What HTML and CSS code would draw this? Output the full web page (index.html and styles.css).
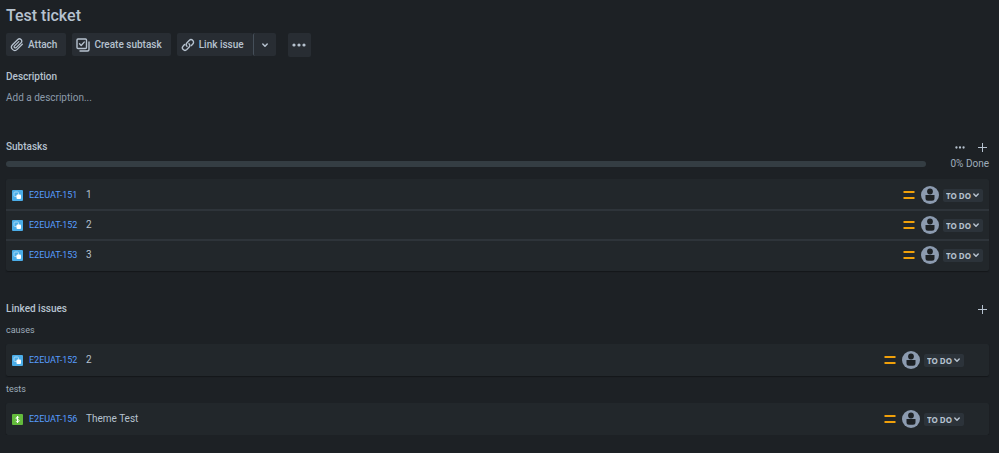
FILE: index.html
```html
<!DOCTYPE html>
<html lang="en">

<head>
    <meta charset="UTF-8" />
    <meta name="viewport" content="width=device-width, initial-scale=1" />
    <title>Test ticket</title>
    <link rel="stylesheet" href="styles.css">
</head>

<body>
    <!-- Shared icons -->
    <svg class="sprite" aria-hidden="true">
        <symbol id="icon-subtask" viewBox="0 0 11 11">
            <rect width="11" height="11" rx="1" fill="#4bade8" />
            <rect x="2" y="2" width="4.500" height="4.500" rx="1" fill="none" stroke="#a5d8f5" />
            <rect x="4.500" y="4.500" width="4.500" height="4.500" rx="1" fill="#fff" />
        </symbol>
        <symbol id="icon-test" viewBox="0 0 11 11">
            <rect width="11" height="11" rx="1" fill="#63ba3c" />
            <path d="M7.2 3.6C6.6 3 4 2.7 4 4.2c0 1.500 3.200.9 3.200 2.500 0 1.500-2.700 1.300-3.400.5M5.500 2v7" fill="none" stroke="#fff" stroke-width="1" />
        </symbol>
        <symbol id="icon-medium" viewBox="0 0 12 10">
            <path d="M.5 2h11M.5 8h11" stroke="#f0a00a" stroke-width="2" />
        </symbol>
        <symbol id="icon-person" viewBox="0 0 18 18">
            <circle cx="9" cy="9" r="9" fill="#8c9bb0" />
            <circle cx="9" cy="5.500" r="2.900" fill="#1d2125" />
            <path d="M4.500 9h9v3.200a2.500 2.500 0 0 1-2.500 2.500H7a2.500 2.500 0 0 1-2.500-2.500z" fill="#1d2125" />
        </symbol>
        <symbol id="icon-chevron" viewBox="0 0 8 8">
            <path d="M1.800 3 4 5.200 6.200 3" fill="none" stroke="currentColor" stroke-width="1.500" stroke-linecap="round" stroke-linejoin="round" />
        </symbol>
        <symbol id="icon-plus" viewBox="0 0 9 9">
            <path d="M4.500 0v9M0 4.500h9" stroke="currentColor" />
        </symbol>
        <symbol id="icon-more" viewBox="0 0 14 4">
            <circle cx="2" cy="2" r="1.600" fill="currentColor" />
            <circle cx="7" cy="2" r="1.600" fill="currentColor" />
            <circle cx="12" cy="2" r="1.600" fill="currentColor" />
        </symbol>
    </svg>

    <main class="ticket">
        <h1>Test ticket</h1>

        <div class="toolbar">
            <button class="btn">
                <svg class="btn-icon" viewBox="0 0 14 14"><path d="M12.300 6.200 7.200 11.400a3.300 3.300 0 0 1-4.700-4.700l5.300-5.200a2.300 2.300 0 0 1 3.300 3.200L6.200 9.600a1.200 1.200 0 0 1-1.700-1.700l4.300-4.300" fill="none" stroke="currentColor" stroke-width="1.300" stroke-linecap="round" stroke-linejoin="round" /></svg>
                Attach
            </button>
            <button class="btn">
                <svg class="btn-icon" viewBox="0 0 14 14"><g fill="none" stroke="currentColor" stroke-width="1.400" stroke-linecap="round" stroke-linejoin="round"><rect x="1" y="1" width="9.500" height="9.500" rx="1" /><path d="m3.500 5.800 1.700 1.700 3-3.400M13 4v7.500a1.500 1.500 0 0 1-1.500 1.500H4" /></g></svg>
                Create subtask
            </button>
            <div class="btn-group">
                <button class="btn">
                    <svg class="btn-icon" viewBox="0 0 14 14"><g fill="none" stroke="currentColor" stroke-width="1.400" stroke-linecap="round"><path d="M6 8.300a2.600 2.600 0 0 1 0-3.600l2.200-2.300a2.500 2.500 0 0 1 3.600 3.600L10.400 7.500" /><path d="M8 5.700a2.600 2.600 0 0 1 0 3.600l-2.200 2.300A2.500 2.500 0 0 1 2.200 8l1.400-1.500" /></g></svg>
                    Link issue
                </button>
                <button class="btn btn-split" aria-label="Link options"><svg class="chevron"><use href="#icon-chevron" /></svg></button>
            </div>
            <button class="btn btn-more" aria-label="More actions"><svg class="more"><use href="#icon-more" /></svg></button>
        </div>

        <section class="description">
            <h2>Description</h2>
            <p>Add a description...</p>
        </section>

        <section class="subtasks">
            <div class="section-header">
                <h2>Subtasks</h2>
                <button class="icon-btn" aria-label="Subtask actions"><svg class="more-small"><use href="#icon-more" /></svg></button>
                <button class="icon-btn" aria-label="Add subtask"><svg class="plus"><use href="#icon-plus" /></svg></button>
            </div>
            <div class="progress">
                <div class="progress-track"></div>
                <span>0% Done</span>
            </div>
            <ul class="card">
                <li class="issue">
                    <svg class="type"><use href="#icon-subtask" /></svg>
                    <a class="key" href="#">E2EUAT-151</a>
                    <span class="summary">1</span>
                    <svg class="priority"><use href="#icon-medium" /></svg>
                    <svg class="avatar"><use href="#icon-person" /></svg>
                    <label class="status"><select aria-label="Status of E2EUAT-151"><option>TO DO</option></select><svg class="chevron"><use href="#icon-chevron" /></svg></label>
                </li>
                <li class="issue">
                    <svg class="type"><use href="#icon-subtask" /></svg>
                    <a class="key" href="#">E2EUAT-152</a>
                    <span class="summary">2</span>
                    <svg class="priority"><use href="#icon-medium" /></svg>
                    <svg class="avatar"><use href="#icon-person" /></svg>
                    <label class="status"><select aria-label="Status of E2EUAT-152"><option>TO DO</option></select><svg class="chevron"><use href="#icon-chevron" /></svg></label>
                </li>
                <li class="issue">
                    <svg class="type"><use href="#icon-subtask" /></svg>
                    <a class="key" href="#">E2EUAT-153</a>
                    <span class="summary">3</span>
                    <svg class="priority"><use href="#icon-medium" /></svg>
                    <svg class="avatar"><use href="#icon-person" /></svg>
                    <label class="status"><select aria-label="Status of E2EUAT-153"><option>TO DO</option></select><svg class="chevron"><use href="#icon-chevron" /></svg></label>
                </li>
            </ul>
        </section>

        <section class="linked">
            <div class="section-header">
                <h2>Linked issues</h2>
                <button class="icon-btn" aria-label="Add linked issue"><svg class="plus"><use href="#icon-plus" /></svg></button>
            </div>
            <h3>causes</h3>
            <ul class="card">
                <li class="issue">
                    <svg class="type"><use href="#icon-subtask" /></svg>
                    <a class="key" href="#">E2EUAT-152</a>
                    <span class="summary">2</span>
                    <svg class="priority"><use href="#icon-medium" /></svg>
                    <svg class="avatar"><use href="#icon-person" /></svg>
                    <label class="status"><select aria-label="Status of linked E2EUAT-152"><option>TO DO</option></select><svg class="chevron"><use href="#icon-chevron" /></svg></label>
                </li>
            </ul>
            <h3>tests</h3>
            <ul class="card">
                <li class="issue">
                    <svg class="type"><use href="#icon-test" /></svg>
                    <a class="key" href="#">E2EUAT-156</a>
                    <span class="summary">Theme Test</span>
                    <svg class="priority"><use href="#icon-medium" /></svg>
                    <svg class="avatar"><use href="#icon-person" /></svg>
                    <label class="status"><select aria-label="Status of linked E2EUAT-156"><option>TO DO</option></select><svg class="chevron"><use href="#icon-chevron" /></svg></label>
                </li>
            </ul>
        </section>
    </main>
</body>

</html>
```
FILE: styles.css
```css
:root {
    --bg: #1d2125;
    --card: #22272b;
    --button: #282d33;
    --line: #2e343a;
    --text: #b6c2cf;
    --subtle: #8c9bab;
    --link: #579dff;
}

* {
    box-sizing: border-box;
}

body {
    margin: 0;
    font-family: 'Segoe UI', Roboto, sans-serif;
    font-size: 10px;
    line-height: 16px;
    background-color: var(--bg);
    color: var(--text);
}

.sprite {
    position: absolute;
    width: 0;
    height: 0;
}

svg {
    display: block;
    flex-shrink: 0;
}

h1, h2, h3, p, ul {
    margin: 0;
    padding: 0;
}

.ticket {
    padding: 4px 10px 0 6px;
}

h1 {
    font-size: 16px;
    line-height: 24px;
    font-weight: 500;
}

h2 {
    font-size: 10px;
    font-weight: 500;
}

h3 {
    font-size: 9px;
    font-weight: 400;
    color: #9fadbc;
}

/* Toolbar */
.toolbar {
    display: flex;
    gap: 6px;
    margin-top: 5px;
}

.btn {
    display: flex;
    align-items: center;
    gap: 4px;
    height: 23px;
    padding: 0 9px 0 4px;
    border: none;
    border-radius: 2px;
    background-color: var(--button);
    color: var(--text);
    font-family: inherit;
    font-size: 10px;
    font-weight: 500;
    cursor: pointer;
}

.btn-icon {
    width: 14px;
    height: 14px;
}

.btn-group {
    display: flex;
}

.btn-split {
    padding: 0 7px;
    border-left: 1px solid #454f59;
}

.chevron {
    width: 8px;
    height: 8px;
}

.btn-more {
    justify-content: center;
    width: 23px;
    height: 24px;
    margin-left: 6px;
    padding: 0;
}

.more {
    width: 14px;
    height: 4px;
}

.description {
    margin-top: 12px;
}

.description p {
    margin-top: 5px;
    color: var(--subtle);
}

/* Section headers */
.section-header {
    display: flex;
    align-items: center;
    gap: 13px;
    padding-right: 2px;
}

.section-header h2 {
    flex: 1;
}

.icon-btn {
    padding: 0;
    border: none;
    background: none;
    color: var(--text);
    cursor: pointer;
}

.more-small {
    width: 10px;
    height: 3px;
}

.plus {
    width: 9px;
    height: 9px;
}

.subtasks {
    margin-top: 33px;
}

.progress {
    display: flex;
    align-items: center;
    gap: 24px;
    margin-top: 1px;
    color: #9fadbc;
}

.progress-track {
    flex: 1;
    height: 6px;
    border-radius: 3px;
    background-color: #343d43;
}

/* Issue lists */
.card {
    list-style: none;
    border-radius: 2px;
    background-color: var(--card);
    box-shadow: 0 1px 1px #14171a;
}

.subtasks .card {
    margin-top: 7px;
    padding-bottom: 2px;
}

.issue {
    display: flex;
    align-items: center;
    height: 32px;
    padding: 0 6px;
}

.subtasks .issue {
    height: 30px;
    border-top: 2px solid var(--line);
}

.subtasks .issue:first-child {
    border-color: transparent;
}

.linked .issue {
    padding-right: 25px;
}

.type {
    width: 11px;
    height: 11px;
}

.key {
    width: 57px;
    margin-left: 6px;
    font-size: 9px;
    font-weight: 400;
    color: var(--link);
    text-decoration: none;
}

.key:hover {
    text-decoration: underline;
}

.summary {
    flex: 1;
}

.priority {
    width: 12px;
    height: 10px;
}

.avatar {
    width: 18px;
    height: 18px;
    margin: 0 4px 0 6px;
}

.status {
    display: grid;
    align-items: center;
}

.status select,
.status .chevron {
    grid-area: 1 / 1;
}

.status .chevron {
    justify-self: end;
    margin-right: 3px;
    pointer-events: none;
}

.status select {
    width: 40px;
    height: 13px;
    padding: 0 0 0 3px;
    border: none;
    border-radius: 2px;
    appearance: none;
    background-color: #2c333a;
    color: var(--text);
    font-family: 'Segoe UI', 'Noto Sans', sans-serif;
    font-size: 8px;
    font-weight: 700;
    line-height: 13px;
}

.linked {
    margin-top: 30px;
}

.linked h3 {
    margin: 5px 0 6px;
}

.linked .card + h3 {
    margin-top: 5px;
}
```
